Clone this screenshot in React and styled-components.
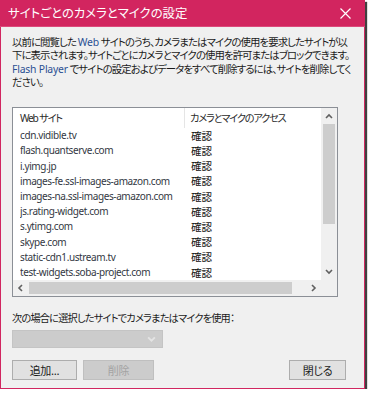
import React from 'react'
import styled, { createGlobalStyle } from 'styled-components'

const GlobalStyle = createGlobalStyle`
  html, body {
    margin: 0;
    padding: 0;
    background: #ffffff;
  }
  body {
    font-family: "Noto Sans", "Noto Sans CJK JP", sans-serif;
    font-feature-settings: "palt";
  }
`

const Window = styled.div`
  width: 365px;
  height: 389px;
  box-sizing: border-box;
  background: #f0f0f0;
  border: 1px solid #d12660;
  border-top: none;
  box-shadow: 2px 2px 1px rgba(0, 0, 0, 0.75);
  display: flex;
  flex-direction: column;
`

const TitleBar = styled.div`
  height: 27px;
  margin: 0 -1px;
  background: #d2255f;
  border-bottom: 1px solid #dc4a7b;
  box-sizing: border-box;
  display: flex;
  align-items: center;
  justify-content: space-between;
  padding: 0 8px 0 8px;
  color: #ffffff;
  font-size: 12.4px;
  font-family: "Noto Sans CJK JP", sans-serif;
  font-feature-settings: "palt";
`

const CloseBtn = styled.div`
  width: 20px;
  height: 20px;
  display: flex;
  align-items: center;
  justify-content: center;
  margin-right: 2px;
`

const Body = styled.div`
  flex: 1;
  display: flex;
  flex-direction: column;
  padding: 9px 0 0 11px;
  color: #1b1b1b;
  font-size: 11px;
`

const Para = styled.div`
  line-height: 13.4px;
  font-size: 10.4px;
  letter-spacing: -0.9px;
  white-space: nowrap;
`

const Blue = styled.span`
  color: #2a4f93;
  letter-spacing: -0.2px;
`

const ListBox = styled.div`
  margin-top: 17px;
  width: 326px;
  height: 190px;
  box-sizing: border-box;
  border: 1px solid #8b8f96;
  background: #ffffff;
  display: grid;
  grid-template-columns: 308px 16px;
  grid-template-rows: 172px 16px;
`

const ListContent = styled.div`
  display: flex;
  flex-direction: column;
  overflow: hidden;
`

const HeaderRow = styled.div`
  height: 20px;
  display: flex;
  align-items: stretch;
  color: #2b2b2b;
  font-size: 10.2px;
  letter-spacing: -1.2px;
  white-space: nowrap;
`

const HeaderCell = styled.div`
  width: ${p => (p.$w ? `${p.$w}px` : 'auto')};
  flex: ${p => (p.$w ? 'none' : '1')};
  box-sizing: border-box;
  display: flex;
  align-items: center;
  padding-left: ${p => p.$pad}px;
  border-right: ${p => (p.$divider ? '1px solid #e5e5e5' : 'none')};
`

const Row = styled.div`
  height: 15.3px;
  display: flex;
  align-items: center;
  padding-left: 7px;
  white-space: nowrap;
`

const Site = styled.span`
  width: 171px;
  flex: none;
  overflow: hidden;
  color: #333843;
  font-size: 10px;
  letter-spacing: -0.4px;
`

const Access = styled.span`
  color: #111;
  font-size: 10.6px;
  font-family: "Noto Sans CJK JP", sans-serif;
`

const VScroll = styled.div`
  background: #f0f0f0;
  display: flex;
  flex-direction: column;
  align-items: center;
`

const ArrowBox = styled.div`
  width: 16px;
  height: ${p => p.$h || 17}px;
  display: flex;
  align-items: center;
  justify-content: center;
`

const VThumb = styled.div`
  width: 12px;
  height: 100px;
  background: #cdcdcd;
`

const Spacer = styled.div`
  flex: 1;
`

const HScroll = styled.div`
  background: #f0f0f0;
  display: flex;
  align-items: center;
`

const HThumb = styled.div`
  width: 263px;
  height: 12px;
  background: #cdcdcd;
`

const Corner = styled.div`
  background: #f0f0f0;
`

const Label = styled.div`
  margin-top: 14px;
  font-size: 10.2px;
  letter-spacing: -0.8px;
  line-height: 14px;
  white-space: nowrap;
  font-family: "Noto Sans CJK JP", sans-serif;
`

const Select = styled.div`
  margin-top: 5px;
  width: 151px;
  height: 18px;
  box-sizing: border-box;
  background: #cccccc;
  border: 1px solid #c4c4c4;
  display: flex;
  align-items: center;
  justify-content: flex-end;
  padding-right: 6px;
`

const ButtonRow = styled.div`
  margin-top: 12px;
  display: flex;
  align-items: center;
  gap: 6px;
  padding-right: 18px;
`

const Button = styled.div`
  width: ${p => p.$w}px;
  height: 20px;
  box-sizing: border-box;
  display: flex;
  align-items: center;
  justify-content: center;
  font-size: 11px;
  letter-spacing: -0.3px;
  font-family: "Noto Sans CJK JP", sans-serif;
  background: ${p => (p.$disabled ? '#cccccc' : '#e1e1e1')};
  border: 1px solid ${p => (p.$disabled ? '#bfbfbf' : '#adadad')};
  color: ${p => (p.$disabled ? '#a3a3a3' : '#1b1b1b')};
  margin-left: ${p => (p.$push ? 'auto' : '0')};
`

const Chevron = ({ dir, color = '#606060', size = 8 }) => {
  const paths = {
    up: 'M1 6 L4 3 L7 6',
    down: 'M1 3 L4 6 L7 3',
    left: 'M5 1 L2 4 L5 7',
    right: 'M3 1 L6 4 L3 7',
  }
  return (
    <svg width={size} height={size} viewBox="0 0 8 8">
      <path d={paths[dir]} fill="none" stroke={color} strokeWidth="1.6" />
    </svg>
  )
}

const sites = [
  'cdn.vidible.tv',
  'flash.quantserve.com',
  'i.yimg.jp',
  'images-fe.ssl-images-amazon.com',
  'images-na.ssl-images-amazon.com',
  'js.rating-widget.com',
  's.ytimg.com',
  'skype.com',
  'static-cdn1.ustream.tv',
  'test-widgets.soba-project.com',
]

export default function App() {
  return (
    <>
      <GlobalStyle />
      <Window>
        <TitleBar>
          <span>サイトごとのカメラとマイクの設定</span>
          <CloseBtn>
            <svg width="11" height="11" viewBox="0 0 11 11">
              <path d="M0.5 0.5 L10.5 10.5 M10.5 0.5 L0.5 10.5" stroke="#fff" strokeWidth="1.2" />
            </svg>
          </CloseBtn>
        </TitleBar>
        <Body>
          <Para>
            以前に閲覧した <Blue>Web</Blue> サイトのうち、カメラまたはマイクの使用を要求したサイトが以
            <br />
            下に表示されます。サイトごとにカメラとマイクの使用を許可またはブロックできます。
            <br />
            <Blue>Flash Player</Blue> でサイトの設定およびデータをすべて削除するには、サイトを削除してく
            <br />
            ださい。
          </Para>
          <ListBox>
            <ListContent>
              <HeaderRow>
                <HeaderCell $w={172} $pad={7} $divider>Web サイト</HeaderCell>
                <HeaderCell $pad={5}>カメラとマイクのアクセス</HeaderCell>
              </HeaderRow>
              {sites.map(s => (
                <Row key={s}>
                  <Site>{s}</Site>
                  <Access>確認</Access>
                </Row>
              ))}
            </ListContent>
            <VScroll>
              <ArrowBox $h={16}>
                <Chevron dir="up" />
              </ArrowBox>
              <VThumb />
              <Spacer />
              <ArrowBox>
                <Chevron dir="down" />
              </ArrowBox>
            </VScroll>
            <HScroll>
              <ArrowBox $h={16}>
                <Chevron dir="left" />
              </ArrowBox>
              <HThumb />
              <Spacer />
              <ArrowBox $h={16}>
                <Chevron dir="right" />
              </ArrowBox>
            </HScroll>
            <Corner />
          </ListBox>
          <Label>次の場合に選択したサイトでカメラまたはマイクを使用：</Label>
          <Select>
            <Chevron dir="down" color="#e4e4e4" size={9} />
          </Select>
          <ButtonRow>
            <Button $w={65}>追加...</Button>
            <Button $w={71} $disabled>削除</Button>
            <Button $w={57} $push>閉じる</Button>
          </ButtonRow>
        </Body>
      </Window>
    </>
  )
}
